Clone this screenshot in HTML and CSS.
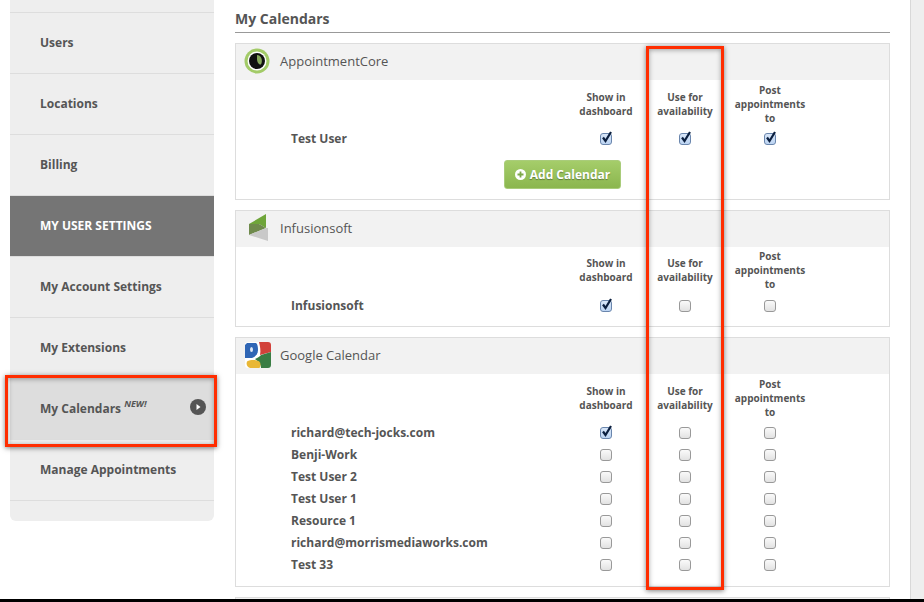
FILE: index.html
```html
<!DOCTYPE html>
<html lang="en">
<head>
<meta charset="utf-8">
<title>My Calendars</title>
<link rel="stylesheet" href="styles.css">
</head>
<body>
<div class="page">
  <div class="layout">
    <nav class="sidebar">
      <div class="nav-top"></div>
      <a class="nav-item">Users</a>
      <a class="nav-item">Locations</a>
      <a class="nav-item">Billing</a>
      <a class="nav-item nav-head">MY USER SETTINGS</a>
      <a class="nav-item">My Account Settings</a>
      <a class="nav-item">My Extensions</a>
      <a class="nav-item nav-current"><span>My Calendars <sup class="new">NEW!</sup></span>
        <svg class="nav-arrow" width="16" height="16" viewBox="0 0 16 16"><circle cx="8" cy="8" r="8" fill="#555"/><path d="M6.500 5v6L10.500 8z" fill="#fff"/></svg>
      </a>
      <a class="nav-item">Manage Appointments</a>
      <div class="nav-bottom"></div>
    </nav>

    <main class="content">
      <h1 class="title">My Calendars</h1>

      <section class="card card-core">
        <header class="card-head">
          <span class="logo">
            <svg width="26" height="26" viewBox="0 0 26 26"><circle cx="13" cy="13" r="12.500" fill="#a3cb68"/><circle cx="13" cy="13" r="9.500" fill="#fff"/><circle cx="13" cy="13" r="8" fill="#111"/><path d="M13 7c3.400 .3 5 2.800 4.800 6.800-.1 1.400-.7 2.600-1.500 3-2-.8-3.300-3.200-3.300-5.300z" fill="#86a85c"/></svg>
          </span>
          <span class="card-name">AppointmentCore</span>
        </header>
        <div class="grid">
          <div class="col"></div><div class="col">Show in dashboard</div><div class="col">Use for availability</div><div class="col">Post appointments to</div>
          <div class="name">Test User</div>
          <div class="cell"><span class="box on"><svg viewBox="0 0 14 16" width="14" height="16"><path d="M3 6.500L5.500 10 11 1" fill="none" stroke="#0b1f3f" stroke-width="2.200"/></svg></span></div>
          <div class="cell"><span class="box on"><svg viewBox="0 0 14 16" width="14" height="16"><path d="M3 6.500L5.500 10 11 1" fill="none" stroke="#0b1f3f" stroke-width="2.200"/></svg></span></div>
          <div class="cell"><span class="box on"><svg viewBox="0 0 14 16" width="14" height="16"><path d="M3 6.500L5.500 10 11 1" fill="none" stroke="#0b1f3f" stroke-width="2.200"/></svg></span></div>
        </div>
        <a class="add-btn">
          <svg width="11" height="11" viewBox="0 0 11 11"><circle cx="5.500" cy="5.500" r="5.500" fill="#fff"/><path d="M5.500 2.500v6M2.500 5.500h6" stroke="#7da84a" stroke-width="1.800"/></svg>
          Add Calendar
        </a>
      </section>

      <section class="card card-infusion">
        <header class="card-head">
          <span class="logo">
            <svg width="26" height="28" viewBox="0 0 26 28"><path d="M22 0v14l-7-4H5z" fill="#6fa53a"/><path d="M5 10h10l7 4-17 7z" fill="#6f8a4c"/><path d="M5 21l17-7h2v13z" fill="#c9c9c9"/></svg>
          </span>
          <span class="card-name">Infusionsoft</span>
        </header>
        <div class="grid">
          <div class="col"></div><div class="col">Show in dashboard</div><div class="col">Use for availability</div><div class="col">Post appointments to</div>
          <div class="name">Infusionsoft</div>
          <div class="cell"><span class="box on"><svg viewBox="0 0 14 16" width="14" height="16"><path d="M3 6.500L5.500 10 11 1" fill="none" stroke="#0b1f3f" stroke-width="2.200"/></svg></span></div>
          <div class="cell"><span class="box"></span></div>
          <div class="cell"><span class="box"></span></div>
        </div>
      </section>

      <section class="card card-google">
        <header class="card-head">
          <span class="logo">
            <svg class="logo-google" width="26" height="26" viewBox="0 0 26 26"><rect width="26" height="26" rx="3" fill="#fff"/><path d="M14 0h9a3 3 0 0 1 3 3v7l-11 3c1-4 0-9-1-13z" fill="#d2413a"/><path d="M26 10v13a3 3 0 0 1-3 3H16c0-3-2-6-6-9 3-1 5-3 6-4z" fill="#3a7d44"/><path d="M2 1h9c1.500 1 2 4 2 7 0 4-3 7-6 8H0V3z" fill="#2f66b5"/><ellipse cx="6.500" cy="7.500" rx="1.500" ry="2.500" fill="#dfe8f5"/><path d="M2 19.500c4-2 11-2 13 1 1 2 .5 4-.5 5.500H5c-3-1-4-4-3-6.500z" fill="#e9b735"/></svg>
          </span>
          <span class="card-name">Google Calendar</span>
        </header>
        <div class="grid">
          <div class="col"></div><div class="col">Show in dashboard</div><div class="col">Use for availability</div><div class="col">Post appointments to</div>
          <div class="name">richard@tech-jocks.com</div>
          <div class="cell"><span class="box on"><svg viewBox="0 0 14 16" width="14" height="16"><path d="M3 6.500L5.500 10 11 1" fill="none" stroke="#0b1f3f" stroke-width="2.200"/></svg></span></div>
          <div class="cell"><span class="box"></span></div><div class="cell"><span class="box"></span></div>
          <div class="name">Benji-Work</div>
          <div class="cell"><span class="box"></span></div><div class="cell"><span class="box"></span></div><div class="cell"><span class="box"></span></div>
          <div class="name">Test User 2</div>
          <div class="cell"><span class="box"></span></div><div class="cell"><span class="box"></span></div><div class="cell"><span class="box"></span></div>
          <div class="name">Test User 1</div>
          <div class="cell"><span class="box"></span></div><div class="cell"><span class="box"></span></div><div class="cell"><span class="box"></span></div>
          <div class="name">Resource 1</div>
          <div class="cell"><span class="box"></span></div><div class="cell"><span class="box"></span></div><div class="cell"><span class="box"></span></div>
          <div class="name">richard@morrismediaworks.com</div>
          <div class="cell"><span class="box"></span></div><div class="cell"><span class="box"></span></div><div class="cell"><span class="box"></span></div>
          <div class="name">Test 33</div>
          <div class="cell"><span class="box"></span></div><div class="cell"><span class="box"></span></div><div class="cell"><span class="box"></span></div>
        </div>
      </section>

      <section class="card"><header class="card-head"></header></section>
    </main>

    <aside class="rail"></aside>
  </div>
  <div class="bar"></div>
  <div class="mark mark-nav"></div>
  <div class="mark mark-col"></div>
</div>
</body>
</html>
```
FILE: styles.css
```css
* { box-sizing: border-box; }
html, body { margin: 0; padding: 0; background: #fff; }
body { font-family: "Open Sans", "Liberation Sans", sans-serif; color: #555; }
.page { position: relative; width: 924px; height: 602px; overflow: hidden; display: flex; flex-direction: column; }
.layout { flex: 1; min-height: 0; display: flex; overflow: hidden; }
.bar { height: 3px; background: #000; flex: none; }

.sidebar { width: 204px; margin-left: 10px; height: 521px; flex: none; background: #eee; border-radius: 0 0 6px 6px; display: flex; flex-direction: column; }
.nav-top { height: 13px; border-bottom: 1px solid #ddd; flex: none; }
.nav-item { height: 61px; flex: none; padding: 0 16px 2px 30px; display: flex; align-items: center; justify-content: space-between; border-bottom: 1px solid #ddd; font-size: 12px; font-weight: 700; color: #555; }
.nav-head { background: #757575; color: #fff; }
.nav-current { background: #ddd; }
.new { font-size: 9px; font-style: italic; font-weight: 700; line-height: 0; vertical-align: 6px; }
.nav-arrow { flex: none; margin: 0 -8px 2px 0; }

.content { width: 655px; margin-left: 21px; flex: none; }
.title { margin: 10px 0 0; height: 23px; font-size: 14px; line-height: 18px; font-weight: 700; color: #555; border-bottom: 1px solid #999; }
.card { margin-top: 10px; border: 1px solid #ddd; }
.card-head { height: 36px; padding-bottom: 2px; background: #f2f2f2; display: flex; align-items: center; }
.logo { width: 44px; padding-left: 8px; flex: none; display: flex; align-items: center; }
.logo-google { margin-left: 1px; }
.card-name { font-size: 13px; color: #555; }

.grid { display: grid; grid-template-columns: 275px 80px 78px 92px; grid-template-rows: 44px; grid-auto-rows: 22px; padding: 3px 0 10px 55px; }
.col { display: flex; align-items: center; justify-content: center; text-align: center; font-size: 10px; line-height: 14px; font-weight: 700; color: #555; padding: 0 7px 2px; }
.card-infusion .col { padding-bottom: 4px; }
.name { display: flex; align-items: center; font-size: 12px; font-weight: 700; color: #555; white-space: nowrap; }
.cell { display: flex; align-items: center; justify-content: center; padding-top: 2px; }
.box { position: relative; display: block; width: 12px; height: 12px; border: 1px solid #999; border-radius: 3px; background: linear-gradient(#fafafa, #e2e2e2); }
.box.on { border-color: #6a86ad; background: linear-gradient(#d8e6f8, #bcd4f2); }
.box svg { position: absolute; left: -1px; top: -3px; }

.add-btn { display: flex; align-items: center; justify-content: center; gap: 4px; width: 117px; height: 29px; margin: 0 0 10px 268px; border: 1px solid #a9cc7a; border-radius: 3px; background: linear-gradient(#a5cd6a, #8bb64e); color: #fff; font-size: 12px; font-weight: 700; text-shadow: 0 1px 1px rgba(0,0,0,.35); }
.card-core .grid { padding-bottom: 11px; }
.card-google .grid { padding-bottom: 11px; }

.rail { margin-left: 20px; flex: 1; background: #eee; border-left: 1px solid #d8d8d8; }

.mark { position: absolute; border: 3px solid #ff2d00; box-shadow: 0 1px 5px rgba(0,0,0,.5), inset 0 1px 5px rgba(0,0,0,.35); }
.mark-nav { left: 5px; top: 375px; width: 212px; height: 72px; }
.mark-col { left: 646px; top: 46px; width: 78px; height: 544px; }
```
